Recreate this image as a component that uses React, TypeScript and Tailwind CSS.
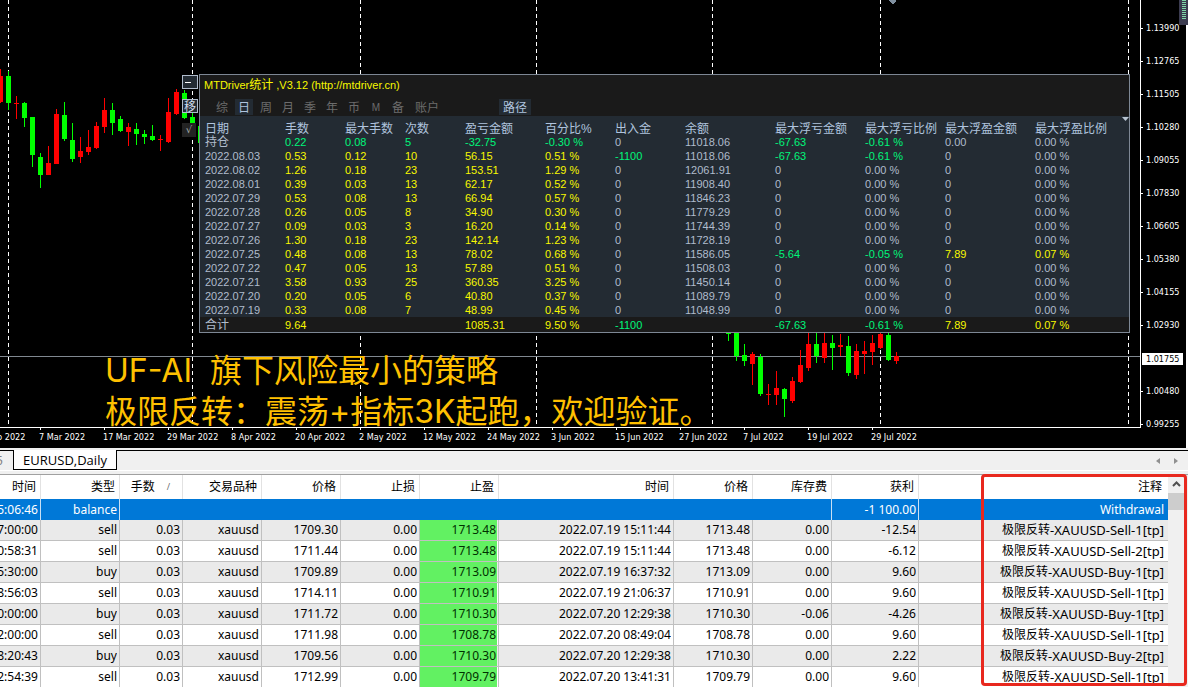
import { Fragment } from 'react';

type Candle = [x: number, high: number, low: number, top: number, bottom: number, up: boolean];

const candles: Candle[] = [
  [0, 69, 103, 76, 102, true],
  [8, 71, 110, 76, 103, false],
  [16, 96, 119, 103, 104, true],
  [24, 102, 127, 103, 118, false],
  [32, 117, 167, 117, 155, false],
  [40, 153, 188, 157, 175, false],
  [48, 146, 175, 163, 175, true],
  [56, 109, 164, 114, 164, true],
  [64, 102, 141, 115, 139, false],
  [72, 123, 162, 140, 159, false],
  [80, 137, 163, 151, 157, true],
  [88, 130, 155, 147, 152, true],
  [96, 122, 149, 126, 148, true],
  [104, 98, 133, 110, 127, true],
  [112, 103, 135, 110, 123, false],
  [120, 116, 132, 119, 131, false],
  [128, 123, 146, 127, 132, true],
  [136, 123, 145, 129, 134, false],
  [144, 130, 144, 134, 137, false],
  [152, 125, 141, 136, 140, false],
  [160, 135, 151, 139, 140, true],
  [168, 98, 143, 112, 142, true],
  [176, 89, 115, 92, 114, true],
  [184, 90, 119, 93, 118, false],
  [192, 110, 123, 117, 123, false],
  [200, 126, 143, 126, 143, false],
  [728, 330, 341, 331, 334, false],
  [736, 330, 361, 331, 356, false],
  [744, 344, 366, 355, 361, false],
  [752, 352, 385, 354, 364, true],
  [760, 354, 396, 357, 394, false],
  [768, 384, 405, 394, 395, true],
  [776, 371, 405, 388, 395, true],
  [784, 388, 417, 389, 399, false],
  [792, 377, 403, 381, 401, true],
  [800, 350, 383, 365, 382, true],
  [808, 331, 371, 344, 368, true],
  [816, 331, 363, 344, 356, false],
  [824, 331, 363, 343, 358, true],
  [832, 335, 370, 343, 348, false],
  [840, 334, 356, 345, 347, true],
  [848, 336, 376, 346, 373, false],
  [856, 344, 379, 351, 375, true],
  [864, 341, 374, 351, 354, true],
  [872, 335, 365, 343, 352, true],
  [880, 331, 349, 334, 348, true],
  [888, 331, 361, 335, 360, false],
  [896, 352, 364, 356, 361, true],
];

const separators = [8, 192, 360, 536, 712, 880, 1128];

const prices = [
  '1.13990', '1.12765', '1.11505', '1.10280', '1.09055', '1.07830', '1.06605',
  '1.05380', '1.04155', '1.02930', '1.01755', '1.00480', '0.99255',
];
const currentPrice = '1.01755';

const dates = [
  '23 Feb 2022', '7 Mar 2022', '17 Mar 2022', '29 Mar 2022', '8 Apr 2022', '20 Apr 2022',
  '2 May 2022', '12 May 2022', '24 May 2022', '3 Jun 2022', '15 Jun 2022', '27 Jun 2022',
  '7 Jul 2022', '19 Jul 2022', '29 Jul 2022',
];

const periods = ['综', '日', '周', '月', '季', '年', '币', 'M', '备'];

const statHeaders = [
  '日期', '手数', '最大手数', '次数', '盈亏金额', '百分比%', '出入金', '余额',
  '最大浮亏金额', '最大浮亏比例', '最大浮盈金额', '最大浮盈比例',
];

const statRows = [
  ['持仓', '0.22', '0.08', '5', '-32.75', '-0.30 %', '0', '11018.06', '-67.63', '-0.61 %', '0.00', '0.00 %'],
  ['2022.08.03', '0.53', '0.12', '10', '56.15', '0.51 %', '-1100', '11018.06', '-67.63', '-0.61 %', '0', '0.00 %'],
  ['2022.08.02', '1.26', '0.18', '23', '153.51', '1.29 %', '0', '12061.91', '0', '0.00 %', '0', '0.00 %'],
  ['2022.08.01', '0.39', '0.03', '13', '62.17', '0.52 %', '0', '11908.40', '0', '0.00 %', '0', '0.00 %'],
  ['2022.07.29', '0.53', '0.08', '13', '66.94', '0.57 %', '0', '11846.23', '0', '0.00 %', '0', '0.00 %'],
  ['2022.07.28', '0.26', '0.05', '8', '34.90', '0.30 %', '0', '11779.29', '0', '0.00 %', '0', '0.00 %'],
  ['2022.07.27', '0.09', '0.03', '3', '16.20', '0.14 %', '0', '11744.39', '0', '0.00 %', '0', '0.00 %'],
  ['2022.07.26', '1.30', '0.18', '23', '142.14', '1.23 %', '0', '11728.19', '0', '0.00 %', '0', '0.00 %'],
  ['2022.07.25', '0.48', '0.08', '13', '78.02', '0.68 %', '0', '11586.05', '-5.64', '-0.05 %', '7.89', '0.07 %'],
  ['2022.07.22', '0.47', '0.05', '13', '57.89', '0.51 %', '0', '11508.03', '0', '0.00 %', '0', '0.00 %'],
  ['2022.07.21', '3.58', '0.93', '25', '360.35', '3.25 %', '0', '11450.14', '0', '0.00 %', '0', '0.00 %'],
  ['2022.07.20', '0.20', '0.05', '6', '40.80', '0.37 %', '0', '11089.79', '0', '0.00 %', '0', '0.00 %'],
  ['2022.07.19', '0.33', '0.08', '7', '48.99', '0.45 %', '0', '11048.99', '0', '0.00 %', '0', '0.00 %'],
];

const statTotal = ['合计', '9.64', '', '', '1085.31', '9.50 %', '-1100', '', '-67.63', '-0.61 %', '7.89', '0.07 %'];

const strategy = '极限反转';

const orders = [
  ['7:00:00', 'sell', '0.03', 'xauusd', '1709.30', '0.00', '1713.48', '2022.07.19 15:11:44', '1713.48', '0.00', '-12.54', '-XAUUSD-Sell-1[tp]'],
  ['0:58:31', 'sell', '0.03', 'xauusd', '1711.44', '0.00', '1713.48', '2022.07.19 15:11:44', '1713.48', '0.00', '-6.12', '-XAUUSD-Sell-2[tp]'],
  ['5:30:00', 'buy', '0.03', 'xauusd', '1709.89', '0.00', '1713.09', '2022.07.19 16:37:32', '1713.09', '0.00', '9.60', '-XAUUSD-Buy-1[tp]'],
  ['8:56:03', 'sell', '0.03', 'xauusd', '1714.11', '0.00', '1710.91', '2022.07.19 21:06:37', '1710.91', '0.00', '9.60', '-XAUUSD-Sell-1[tp]'],
  ['0:00:00', 'buy', '0.03', 'xauusd', '1711.72', '0.00', '1710.30', '2022.07.20 12:29:38', '1710.30', '-0.06', '-4.26', '-XAUUSD-Buy-1[tp]'],
  ['2:00:00', 'sell', '0.03', 'xauusd', '1711.98', '0.00', '1708.78', '2022.07.20 08:49:04', '1708.78', '0.00', '9.60', '-XAUUSD-Sell-1[tp]'],
  ['8:20:43', 'buy', '0.03', 'xauusd', '1709.56', '0.00', '1710.30', '2022.07.20 12:29:38', '1710.30', '0.00', '2.22', '-XAUUSD-Buy-2[tp]'],
  ['2:54:39', 'sell', '0.03', 'xauusd', '1712.99', '0.00', '1709.79', '2022.07.20 13:41:31', '1709.79', '0.00', '9.60', '-XAUUSD-Sell-1[tp]'],
];

const orderHeaders = ['时间', '类型', '手数', '交易品种', '价格', '止损', '止盈', '时间', '价格', '库存费', '获利', '注释'];

// losses are green, gains yellow, everything idle stays steel blue
const statColor = (value: string, col: number, held: boolean) => {
  if (col === 0 || col === 7) return 'text-[#b0bccc]';
  if (value.startsWith('-')) return 'text-[#00f57a]';
  if (col <= 5) return held ? 'text-[#00f57a]' : 'text-[#f8f800]';
  return parseFloat(value) > 0 ? 'text-[#f8f800]' : 'text-[#b0bccc]';
};

const CandleChart = () => (
  <svg className="block h-full w-full" shapeRendering="crispEdges">
    {separators.map(x => (
      <line key={x} x1={x + 0.5} x2={x + 0.5} y1="0" y2="427" stroke="#fff" strokeDasharray="4 3" />
    ))}
    <rect x="0" y="356" width="100%" height="1" fill="#808890" />
    {candles.map(([x, high, low, top, bottom, up]) => (
      <g key={x} fill={up ? '#ff0000' : '#00ff00'}>
        <rect x={x} y={high} width="1" height={low - high} />
        <rect x={x - 2} y={top} width="5" height={bottom - top} />
      </g>
    ))}
    <path d="M889 0h7v1l-3.500 3.500L889 1z" fill="#8090a0" />
  </svg>
);

const StatsPanel = () => (
  <div className="absolute top-[74px] right-[10px] left-[199px] border border-[#7d8794] bg-[#1a1a1a] font-['Liberation_Sans','Noto_Sans_CJK_SC',sans-serif] text-[11px]">
    <div className="h-[22px] pl-1 leading-[21px] text-[#f8f800]">
      MTDriver<span className="text-[12px]">统计</span> ,V3.12 (http://mtdriver.cn)
    </div>
    <div className="flex h-[19px] items-center gap-1 pl-[13px] text-[12px] text-[#6c6c6c]">
      {periods.map(p => (
        <button
          key={p}
          className={
            p === '日'
              ? 'h-4 w-[18px] bg-[#232b33] leading-[18px] text-[#b0c4de]'
              : p === 'M'
                ? 'h-4 w-[18px] text-[10px] leading-[18px]'
                : 'h-4 w-[18px] leading-[18px]'
          }
        >
          {p}
        </button>
      ))}
      <button className="ml-1 h-4 leading-[18px]">账户</button>
      <button className="ml-14 h-4 w-8 bg-[#232b33] leading-[18px] text-[#b0c4de]">路径</button>
    </div>
    <table className="w-full table-fixed border-collapse text-left">
      <colgroup>
        <col className="w-[85px]" />
        <col className="w-[60px]" />
        <col className="w-[60px]" />
        <col className="w-[60px]" />
        <col className="w-[80px]" />
        <col className="w-[70px]" />
        <col className="w-[70px]" />
        <col className="w-[90px]" />
        <col className="w-[90px]" />
        <col className="w-[80px]" />
        <col className="w-[90px]" />
        <col />
      </colgroup>
      <thead className="bg-[#232b33]">
        <tr className="h-[19px] align-bottom text-[12px] text-[#b0c4de]">
          {statHeaders.map(h => (
            <th key={h} className="p-0 leading-3 font-normal whitespace-nowrap first:pl-[5px]">{h}</th>
          ))}
        </tr>
      </thead>
      <tbody className="bg-[#232b33]">
        {statRows.map((row, i) => (
          <tr key={row[0]} className="h-[14px]">
            {row.map((value, col) => (
              <td key={col} className={`p-0 leading-[14px] whitespace-nowrap first:pl-[5px] ${i === 0 && col === 0 ? 'text-[12px]' : ''} ${statColor(value, col, i === 0)}`}>
                {value}
              </td>
            ))}
          </tr>
        ))}
      </tbody>
      <tfoot>
        <tr className="h-[15px] align-bottom">
          {statTotal.map((value, col) => (
            <td key={col} className={`p-0 leading-[14px] whitespace-nowrap first:pl-[5px] first:text-[12px] ${statColor(value, col, false)}`}>
              {value}
            </td>
          ))}
        </tr>
      </tfoot>
    </table>
    <svg className="absolute top-[42px] right-0" width="7" height="4">
      <path d="M0 0h7l-3.500 4z" fill="#b8c4d0" />
    </svg>
  </div>
);

const OrderHistory = () => (
  <div className="relative flex border-t border-[#a0a0a0] bg-[#f0f0f0] pr-1">
    <table className="w-full min-w-0 flex-1 table-fixed border-separate border-spacing-0 text-right">
      <colgroup>
        <col className="w-[41px]" />
        <col className="w-[79px]" />
        <col className="w-[63px]" />
        <col className="w-[79px]" />
        <col className="w-[79px]" />
        <col className="w-[79px]" />
        <col className="w-[79px]" />
        <col className="w-[175px]" />
        <col className="w-[79px]" />
        <col className="w-[79px]" />
        <col className="w-[87px]" />
        <col />
      </colgroup>
      <thead>
        <tr className="h-6 bg-white">
          {orderHeaders.map((h, i) => (
            <th key={i} className="border-r border-[#e2e2e2] p-0 pr-1 font-normal whitespace-nowrap last:border-r-0 last:pr-[6px]">
              <div className="flex h-6 items-center justify-end">
                {h}
                {i === 2 && <span className="pr-2 pl-3 text-[9px] text-[#707070]">/</span>}
              </div>
            </th>
          ))}
        </tr>
      </thead>
      <tbody>
        <tr className="h-[21px] bg-[#0078d7] text-white">
          <td className="border-r border-[#c8e0f4] p-0 pr-[2px] leading-5">
            <div className="flex justify-end overflow-hidden">5:06:46</div>
          </td>
          <td className="border-r border-[#c8e0f4] p-0 pr-[2px] leading-5">balance</td>
          <td colSpan={8} className="border-r border-[#c8e0f4] p-0" />
          <td className="border-r border-[#c8e0f4] p-0 pr-[2px] leading-5">-1 100.00</td>
          <td className="p-0 pr-1 leading-5">Withdrawal</td>
        </tr>
        {orders.map((row, i) => (
          <tr key={i} className={i % 2 ? 'h-[21px] bg-white' : 'h-[21px] bg-[#eaeaea]'}>
            {row.map((value, col) => (
              <Fragment key={col}>
                {col === 6 ? (
                  <td className="border-r border-b border-[#c0c0c0] p-0 pr-[1px] leading-5">
                    <div className="bg-[#62f162] pr-[1px] text-[#003000]">{value}</div>
                  </td>
                ) : (
                  <td className="border-r border-b border-[#c0c0c0] p-0 pr-[2px] leading-5 whitespace-nowrap last:border-r-0 last:pr-1">
                    <div className="flex h-5 justify-end overflow-hidden">
                      {col === 11 ? (
                        <>
                          <span>{strategy}</span>
                          <span className="text-[13px]">{value}</span>
                        </>
                      ) : (
                        value
                      )}
                    </div>
                  </td>
                )}
              </Fragment>
            ))}
          </tr>
        ))}
      </tbody>
    </table>
    <div className="flex w-4 flex-col items-center">
      <button aria-label="Scroll up" className="flex h-[18px] w-full items-center justify-center">
        <svg width="9" height="6" fill="none" stroke="#505050" strokeWidth="2">
          <path d="M1 5l3.500-3.500L8 5" />
        </svg>
      </button>
      <div className="h-[17px] w-full bg-[#cdcdcd]" />
    </div>
    <div className="pointer-events-none absolute -top-[1px] right-[1px] h-[212px] w-[206px] rounded-sm border-[3px] border-[#e8281e]" />
  </div>
);

const App = () => (
  <div className="h-screen w-full overflow-hidden bg-[#f0f0f0] font-['Noto_Sans','Noto_Sans_CJK_SC',sans-serif] text-[12px] text-black">
    <section className="relative flex h-[448px] border-r-2 border-white bg-black text-white">
      <div className="relative min-w-0 flex-1 overflow-hidden">
        <div className="relative h-[428px] border-r border-b border-white">
          <CandleChart />
          <div className="absolute top-[350px] left-[105px] font-['Inter','Noto_Sans_CJK_SC',sans-serif] text-[32px] leading-[41px] font-normal whitespace-pre text-[#ffc000]">
            <p>UF-AI  旗下风险最小的策略</p>
            <p>极限反转：震荡+指标3K起跑，欢迎验证。</p>
          </div>
          <div className="absolute top-[75px] left-[182px] flex flex-col gap-[10px] font-['Noto_Sans_CJK_SC',sans-serif] text-[12px] text-[#d0dcec]">
            <button aria-label="Minimize" className="flex h-[14px] w-4 items-center border border-[#b0bccc] bg-[#232b33] pl-[2px]">
              <span className="h-[1px] w-[6px] bg-white" />
            </button>
            <button className="flex h-[14px] w-4 items-center justify-center border border-[#b0bccc] bg-[#232b33] leading-3">移</button>
            <button className="h-[14px] w-[14px] bg-[#232323] font-['DejaVu_Sans',sans-serif] text-[10px] leading-[14px] text-[#a0a8a8]">√</button>
          </div>
          <StatsPanel />
        </div>
        <div className="-ml-[25px] flex font-['DejaVu_Sans_Condensed','DejaVu_Sans',sans-serif] text-[9px]">
          {dates.map(d => (
            <div key={d} className="w-16 shrink-0 whitespace-nowrap">
              <div className="ml-[1px] h-[2px] w-[1px] bg-white" />
              <div className="leading-[14px]">{d}</div>
            </div>
          ))}
        </div>
      </div>
      <div className="w-[45px] pt-3 font-['DejaVu_Sans_Condensed','DejaVu_Sans',sans-serif] text-[9px]">
        {prices.map(p => (
          <div key={p} className="flex h-[33px] items-center">
            {p === currentPrice ? (
              <span className="ml-[1px] bg-white px-1 leading-3 text-black">{p}</span>
            ) : (
              <>
                <span className="h-[1px] w-[2px] bg-white" />
                <span className="pl-[3px]">{p}</span>
              </>
            )}
          </div>
        ))}
      </div>
      <svg className="absolute top-0 -right-[2px]" width="9" height="25" shapeRendering="crispEdges">
        <rect width="9" height="25" fill="#3c3c50" />
        <path d="M5 0v20" stroke="#7fd8a8" strokeWidth="4" strokeDasharray="1 1" />
      </svg>
    </section>
    <nav className="mt-[2px] flex h-5 items-start font-['Open_Sans',sans-serif] text-[13px]">
      <button className="flex h-5 w-[13px] justify-end overflow-hidden border-t border-black pr-[10px] text-[#808080]">5</button>
      <button className="h-5 w-[104px] border-x border-b border-black bg-white leading-5">EURUSD,Daily</button>
      <div className="flex h-5 flex-1 items-center justify-end gap-[14px] border-t border-black pr-[10px]">
        <button aria-label="Scroll left">
          <svg width="4" height="6"><path d="M4 0v6L0 3z" fill="#909090" /></svg>
        </button>
        <button aria-label="Scroll right">
          <svg width="4" height="6"><path d="M0 0v6l4-3z" fill="#909090" /></svg>
        </button>
      </div>
    </nav>
    <div className="mb-[3px] h-[1px] bg-white" />
    <OrderHistory />
  </div>
);

export default App;
